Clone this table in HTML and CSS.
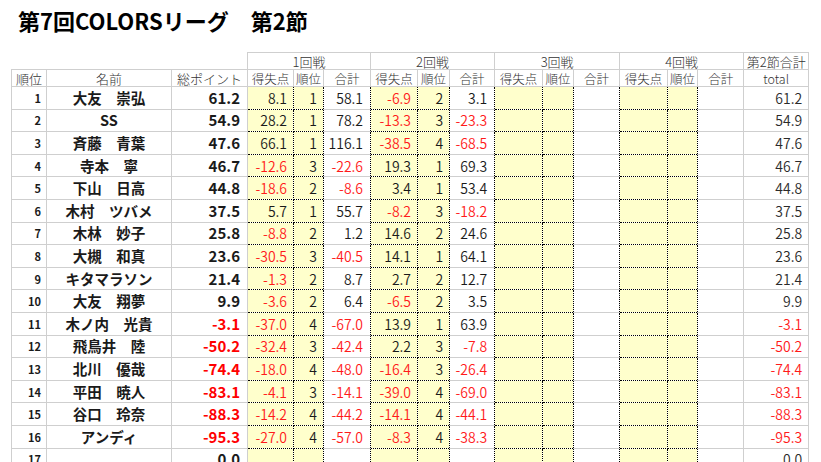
FILE: index.html
```html
<!DOCTYPE html>
<html lang="ja">
<head>
<meta charset="utf-8">
<title>第7回COLORSリーグ 第2節</title>
<link rel="stylesheet" href="styles.css">
</head>
<body>
<h1 class="title">第7回COLORSリーグ　第2節</h1>
<table class="sheet">
  <colgroup>
    <col class="w-rank"><col class="w-name"><col class="w-pts">
    <col class="w46"><col class="w30"><col class="w47">
    <col class="w47"><col class="w32"><col class="w45">
    <col class="w48"><col class="w31"><col class="w46">
    <col class="w48"><col class="w30"><col class="w46">
    <col class="w-total">
  </colgroup>
  <thead>
    <tr class="hrow1">
      <th class="blank" colspan="3"></th>
      <th class="round" colspan="3">1回戦</th>
      <th class="round" colspan="3">2回戦</th>
      <th class="round" colspan="3">3回戦</th>
      <th class="round" colspan="3">4回戦</th>
      <th class="round">第2節合計</th>
    </tr>
    <tr class="hrow2">
      <th class="hl">順位</th><th class="hl">名前</th><th class="hl">総ポイント</th>
      <th>得失点</th><th>順位</th><th>合計</th>
      <th>得失点</th><th>順位</th><th>合計</th>
      <th>得失点</th><th>順位</th><th>合計</th>
      <th>得失点</th><th>順位</th><th>合計</th>
      <th>total</th>
    </tr>
  </thead>
  <tbody>
    <tr><td class="no">1</td><td class="name">大友　崇弘</td><td class="pts">61.2</td><td class="y">8.1</td><td class="y">1</td><td class="sum">58.1</td><td class="y neg">-6.9</td><td class="y">2</td><td class="sum">3.1</td><td class="y"></td><td class="y"></td><td class="sum"></td><td class="y"></td><td class="y"></td><td class="sum"></td><td class="tot">61.2</td></tr>
    <tr><td class="no">2</td><td class="name">SS</td><td class="pts">54.9</td><td class="y">28.2</td><td class="y">1</td><td class="sum">78.2</td><td class="y neg">-13.3</td><td class="y">3</td><td class="sum neg">-23.3</td><td class="y"></td><td class="y"></td><td class="sum"></td><td class="y"></td><td class="y"></td><td class="sum"></td><td class="tot">54.9</td></tr>
    <tr><td class="no">3</td><td class="name">斉藤　青葉</td><td class="pts">47.6</td><td class="y">66.1</td><td class="y">1</td><td class="sum">116.1</td><td class="y neg">-38.5</td><td class="y">4</td><td class="sum neg">-68.5</td><td class="y"></td><td class="y"></td><td class="sum"></td><td class="y"></td><td class="y"></td><td class="sum"></td><td class="tot">47.6</td></tr>
    <tr><td class="no">4</td><td class="name">寺本　寧</td><td class="pts">46.7</td><td class="y neg">-12.6</td><td class="y">3</td><td class="sum neg">-22.6</td><td class="y">19.3</td><td class="y">1</td><td class="sum">69.3</td><td class="y"></td><td class="y"></td><td class="sum"></td><td class="y"></td><td class="y"></td><td class="sum"></td><td class="tot">46.7</td></tr>
    <tr><td class="no">5</td><td class="name">下山　日高</td><td class="pts">44.8</td><td class="y neg">-18.6</td><td class="y">2</td><td class="sum neg">-8.6</td><td class="y">3.4</td><td class="y">1</td><td class="sum">53.4</td><td class="y"></td><td class="y"></td><td class="sum"></td><td class="y"></td><td class="y"></td><td class="sum"></td><td class="tot">44.8</td></tr>
    <tr><td class="no">6</td><td class="name">木村　ツバメ</td><td class="pts">37.5</td><td class="y">5.7</td><td class="y">1</td><td class="sum">55.7</td><td class="y neg">-8.2</td><td class="y">3</td><td class="sum neg">-18.2</td><td class="y"></td><td class="y"></td><td class="sum"></td><td class="y"></td><td class="y"></td><td class="sum"></td><td class="tot">37.5</td></tr>
    <tr><td class="no">7</td><td class="name">木林　妙子</td><td class="pts">25.8</td><td class="y neg">-8.8</td><td class="y">2</td><td class="sum">1.2</td><td class="y">14.6</td><td class="y">2</td><td class="sum">24.6</td><td class="y"></td><td class="y"></td><td class="sum"></td><td class="y"></td><td class="y"></td><td class="sum"></td><td class="tot">25.8</td></tr>
    <tr><td class="no">8</td><td class="name">大槻　和真</td><td class="pts">23.6</td><td class="y neg">-30.5</td><td class="y">3</td><td class="sum neg">-40.5</td><td class="y">14.1</td><td class="y">1</td><td class="sum">64.1</td><td class="y"></td><td class="y"></td><td class="sum"></td><td class="y"></td><td class="y"></td><td class="sum"></td><td class="tot">23.6</td></tr>
    <tr><td class="no">9</td><td class="name">キタマラソン</td><td class="pts">21.4</td><td class="y neg">-1.3</td><td class="y">2</td><td class="sum">8.7</td><td class="y">2.7</td><td class="y">2</td><td class="sum">12.7</td><td class="y"></td><td class="y"></td><td class="sum"></td><td class="y"></td><td class="y"></td><td class="sum"></td><td class="tot">21.4</td></tr>
    <tr><td class="no">10</td><td class="name">大友　翔夢</td><td class="pts">9.9</td><td class="y neg">-3.6</td><td class="y">2</td><td class="sum">6.4</td><td class="y neg">-6.5</td><td class="y">2</td><td class="sum">3.5</td><td class="y"></td><td class="y"></td><td class="sum"></td><td class="y"></td><td class="y"></td><td class="sum"></td><td class="tot">9.9</td></tr>
    <tr><td class="no">11</td><td class="name">木ノ内　光貴</td><td class="pts neg">-3.1</td><td class="y neg">-37.0</td><td class="y">4</td><td class="sum neg">-67.0</td><td class="y">13.9</td><td class="y">1</td><td class="sum">63.9</td><td class="y"></td><td class="y"></td><td class="sum"></td><td class="y"></td><td class="y"></td><td class="sum"></td><td class="tot neg">-3.1</td></tr>
    <tr><td class="no">12</td><td class="name">飛鳥井　陸</td><td class="pts neg">-50.2</td><td class="y neg">-32.4</td><td class="y">3</td><td class="sum neg">-42.4</td><td class="y">2.2</td><td class="y">3</td><td class="sum neg">-7.8</td><td class="y"></td><td class="y"></td><td class="sum"></td><td class="y"></td><td class="y"></td><td class="sum"></td><td class="tot neg">-50.2</td></tr>
    <tr><td class="no">13</td><td class="name">北川　優哉</td><td class="pts neg">-74.4</td><td class="y neg">-18.0</td><td class="y">4</td><td class="sum neg">-48.0</td><td class="y neg">-16.4</td><td class="y">3</td><td class="sum neg">-26.4</td><td class="y"></td><td class="y"></td><td class="sum"></td><td class="y"></td><td class="y"></td><td class="sum"></td><td class="tot neg">-74.4</td></tr>
    <tr><td class="no">14</td><td class="name">平田　暁人</td><td class="pts neg">-83.1</td><td class="y neg">-4.1</td><td class="y">3</td><td class="sum neg">-14.1</td><td class="y neg">-39.0</td><td class="y">4</td><td class="sum neg">-69.0</td><td class="y"></td><td class="y"></td><td class="sum"></td><td class="y"></td><td class="y"></td><td class="sum"></td><td class="tot neg">-83.1</td></tr>
    <tr><td class="no">15</td><td class="name">谷口　玲奈</td><td class="pts neg">-88.3</td><td class="y neg">-14.2</td><td class="y">4</td><td class="sum neg">-44.2</td><td class="y neg">-14.1</td><td class="y">4</td><td class="sum neg">-44.1</td><td class="y"></td><td class="y"></td><td class="sum"></td><td class="y"></td><td class="y"></td><td class="sum"></td><td class="tot neg">-88.3</td></tr>
    <tr><td class="no">16</td><td class="name">アンディ</td><td class="pts neg">-95.3</td><td class="y neg">-27.0</td><td class="y">4</td><td class="sum neg">-57.0</td><td class="y neg">-8.3</td><td class="y">4</td><td class="sum neg">-38.3</td><td class="y"></td><td class="y"></td><td class="sum"></td><td class="y"></td><td class="y"></td><td class="sum"></td><td class="tot neg">-95.3</td></tr>
    <tr><td class="no">17</td><td class="name"></td><td class="pts">0.0</td><td class="y"></td><td class="y"></td><td class="sum"></td><td class="y"></td><td class="y"></td><td class="sum"></td><td class="y"></td><td class="y"></td><td class="sum"></td><td class="y"></td><td class="y"></td><td class="sum"></td><td class="tot">0.0</td></tr>
  </tbody>
</table>
</body>
</html>
```

FILE: styles.css
```css
html, body {
  margin: 0;
  padding: 0;
  background: #ffffff;
}
body {
  font-family: "Noto Sans CJK JP", "Noto Sans", sans-serif;
  color: #1a1a1a;
  overflow: hidden;
}
.title {
  margin: 0;
  padding: 5px 0 0 18px;
  height: 52px;
  box-sizing: border-box;
  font-size: 22px;
  line-height: 30px;
  font-weight: bold;
  color: #000;
}
.sheet {
  margin-left: 11px;
  border-collapse: collapse;
  table-layout: fixed;
  width: 798px;
}
.w-rank { width: 35px; }
.w-name { width: 125px; }
.w-pts { width: 76px; }
.w30 { width: 30px; }
.w31 { width: 31px; }
.w32 { width: 32px; }
.w45 { width: 45px; }
.w46 { width: 46px; }
.w47 { width: 47px; }
.w48 { width: 48px; }
.w-total { width: 65px; }

.sheet th, .sheet td {
  padding: 0;
  border: 1px solid #cfcfcf;
  white-space: nowrap;
  overflow: hidden;
  line-height: 14px;
}
.sheet th {
  font-weight: 300;
  color: #333;
  font-size: 12.5px;
  line-height: 13px;
  text-align: center;
}
.hrow1 th { height: 16px; font-size: 13px; }
.hrow1 .blank { border: none; border-bottom: 1px solid #cfcfcf; }
.hrow2 th { height: 16px; }
.hrow2 .hl { font-size: 13px; }
.sheet td {
  height: 22.6px;
  font-size: 14px;
  font-weight: 350;
  text-align: right;
  padding-right: 6px;
  box-sizing: border-box;
}
.sheet td.no {
  font-size: 11px;
  font-weight: bold;
  padding-right: 5px;
}
.sheet td.name {
  text-align: center;
  font-weight: bold;
  font-size: 14.5px;
  padding-right: 0;
}
.sheet td.pts {
  font-weight: bold;
  font-size: 15px;
  padding-right: 7px;
}
.sheet td.y {
  background: #ffffcc;
  border: 1px dotted #000;
}
.sheet td.sum {
  border-left: none;
  border-right: none;
  padding-right: 7px;
}
.sheet td.tot {
  color: #2a2a2a;
  padding-right: 6px;
}
.sheet td.neg { color: #ff1a1a; }
.sheet td.pts.neg { color: #ff0000; }
```
